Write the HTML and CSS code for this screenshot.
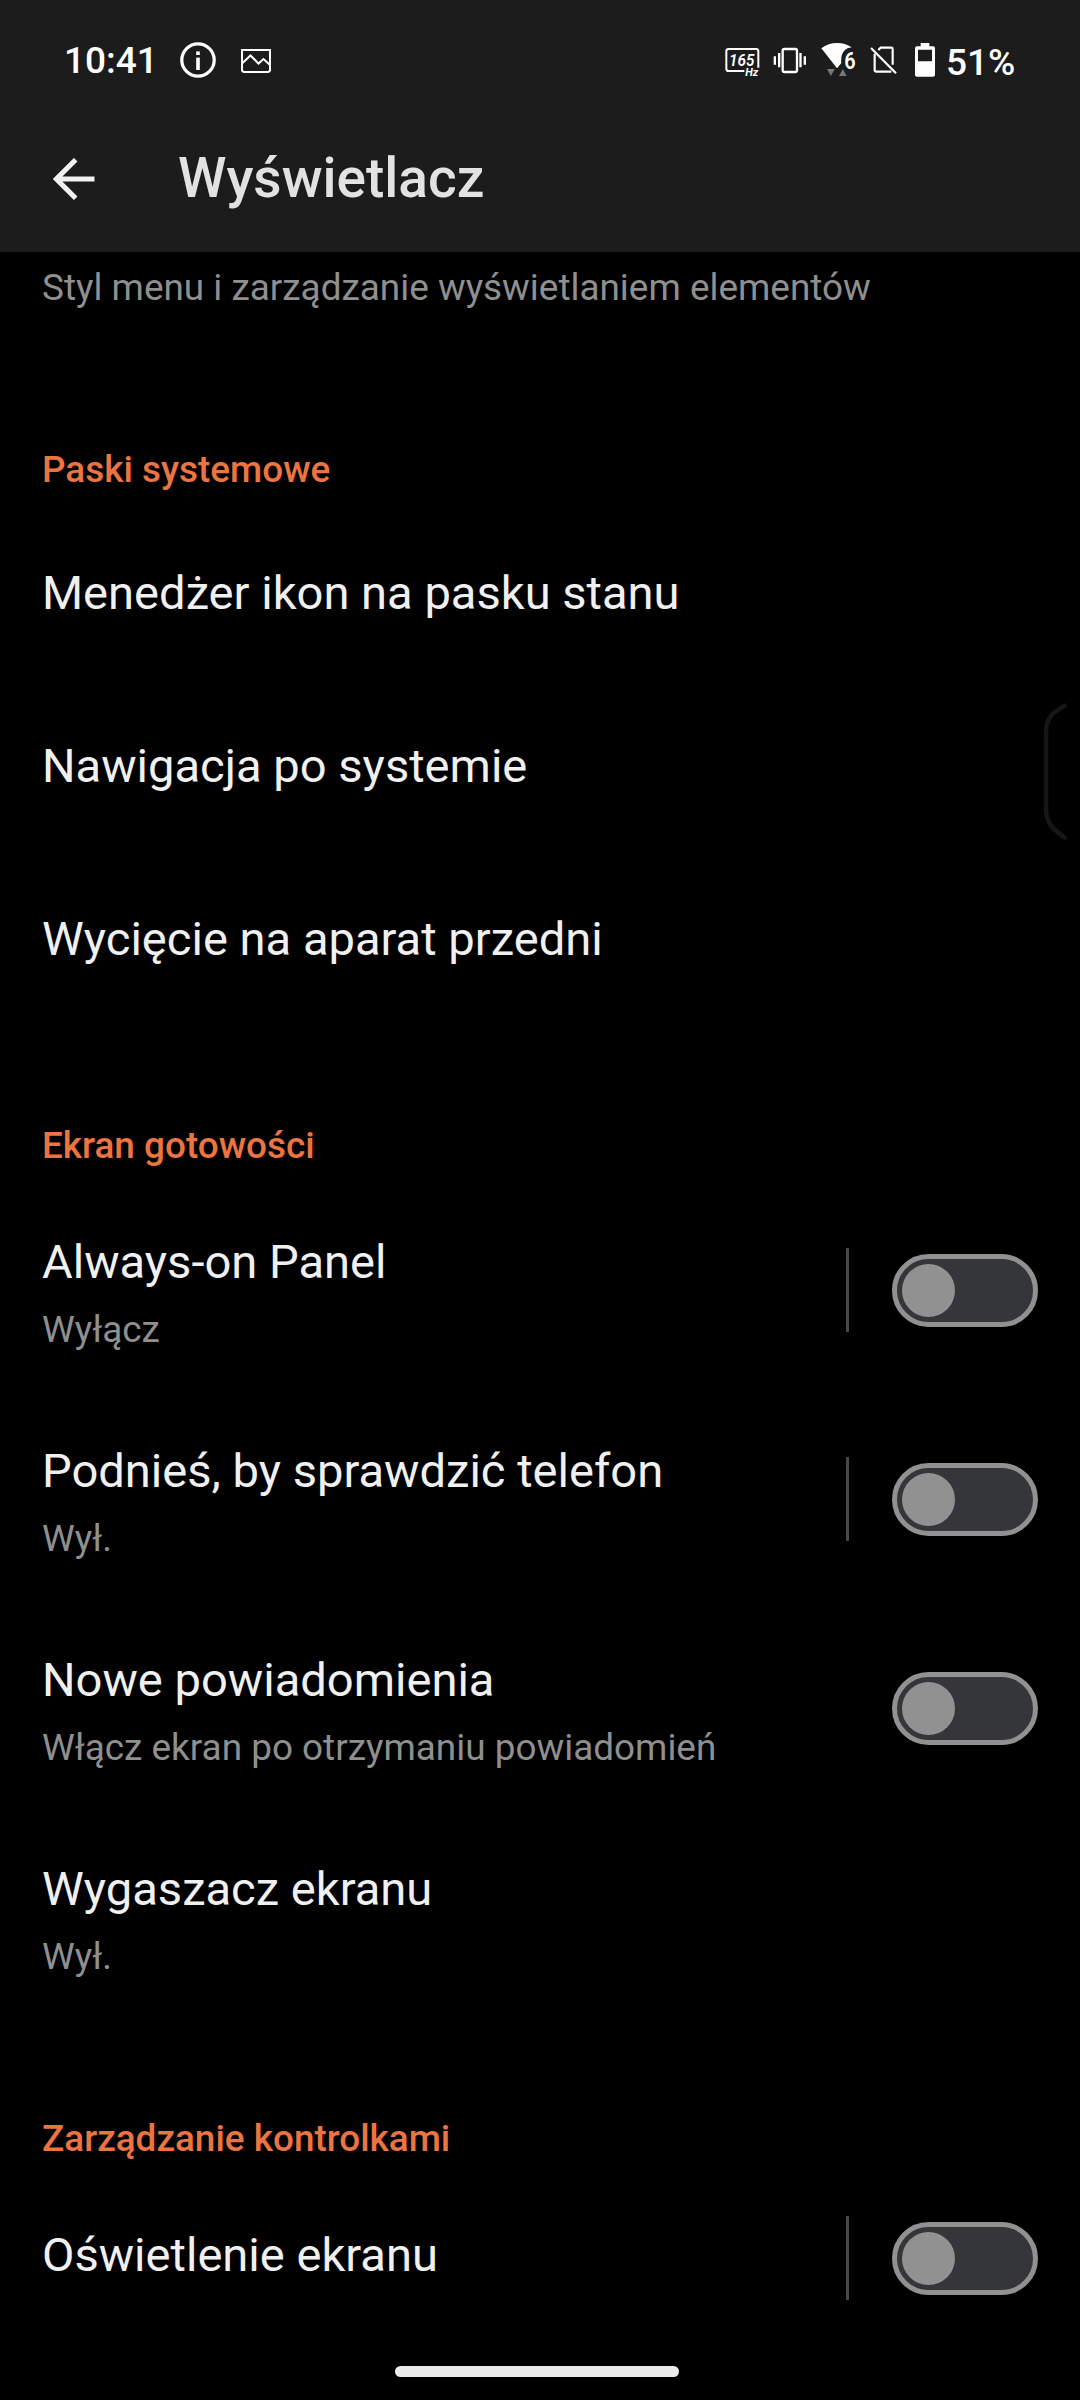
FILE: index.html
```html
<!DOCTYPE html>
<html lang="pl">
<head>
<meta charset="utf-8">
<title>Wyświetlacz</title>
<link rel="stylesheet" href="styles.css">
</head>
<body>
<div class="screen">
  <header class="top">
    <div class="status">
      <span class="time">10:41</span>
      <svg class="ic info" width="36" height="36" viewBox="0 0 36 36" fill="none" stroke="#fff"><circle cx="18" cy="18" r="16.2" stroke-width="3.2"/><path d="M18 15.6V28" stroke-width="3.6"/><path d="M18 9.4V13" stroke-width="3.6"/></svg>
      <svg class="ic photo" width="30" height="24" viewBox="0 0 30 24" fill="none" stroke="#fff" stroke-width="2"><path d="M1 1H29V21.5L27.5 23H2.500L1 21.500Z"/><path d="M1 14.500L9.500 6.500L17.500 14.500L22.500 10L29 16"/></svg>
      <span class="spacer"></span>
      <svg class="ic hz" width="36" height="36" viewBox="75 66 108 108"><path d="M133 153H86Q79 153 79 146V94Q79 87 86 87H168Q175 87 175 94V143" fill="none" stroke="#fff" stroke-width="6"/><text class="glyph rate" x="87" y="137" textLength="76" lengthAdjust="spacingAndGlyphs">165</text><text class="glyph unit" x="136" y="169" textLength="39" lengthAdjust="spacingAndGlyphs">Hz</text></svg>
      <svg class="ic vibrate" width="34" height="36" viewBox="218 66 102 108" fill="none" stroke="#fff"><rect x="247" y="87" width="43" height="69" rx="5" stroke-width="7"/><path d="M236.500 99V142M300.500 99V142" stroke-width="7"/><path d="M223.500 109V134M313.500 109V134" stroke-width="7"/></svg>
      <svg class="ic wifi" width="38" height="36" viewBox="362 66 114 108"><path d="M363 85Q384 69 410 69Q435 69 454 82C436 84 425 96 423 113Q422 122 423 129L410 145Z" fill="#fff"/><text class="glyph six" x="432" y="147" textLength="34" lengthAdjust="spacingAndGlyphs">6</text><path d="M380 147H403L391.500 168ZM416 168H439L427.500 147Z" fill="#777"/></svg>
      <svg class="ic sim" width="28" height="36" viewBox="509 66 84 108" fill="none" stroke="#fff" stroke-width="6.500"><path d="M534 90L541 83H573Q577 83 577 87V134"/><path d="M523 101V150Q523 155 528 155H573"/><path d="M512 84L587 160"/></svg>
      <svg class="ic battery" width="20" height="36" viewBox="645 66 60 108"><path fill="#fff" fill-rule="evenodd" d="M662 69H688V79H699Q705 79 705 85V164Q705 170 699 170H651Q645 170 645 164V85Q645 79 651 79H662ZM654 89V124H696V89Z"/></svg>
      <span class="percent">51%</span>
    </div>
    <div class="appbar">
      <svg class="back" width="42" height="42" viewBox="0 0 42 42" fill="none" stroke="#f1f1f1" stroke-width="5"><path d="M41.500 21H4M22.700 1.700L3.400 21L22.700 40.300"/></svg>
      <h1 class="title">Wyświetlacz</h1>
    </div>
  </header>

  <main class="list">
    <p class="sub lead">Styl menu i zarządzanie wyświetlaniem elementów</p>

    <h2 class="section">Paski systemowe</h2>
    <div class="row single"><span class="name">Menedżer ikon na pasku stanu</span></div>
    <div class="row single"><span class="name">Nawigacja po systemie</span></div>
    <div class="row single"><span class="name">Wycięcie na aparat przedni</span></div>

    <h2 class="section second">Ekran gotowości</h2>
    <div class="row">
      <div class="texts"><span class="name">Always-on Panel</span><span class="sub">Wyłącz</span></div>
      <i class="divider"></i><div class="switch"><i class="knob"></i></div>
    </div>
    <div class="row">
      <div class="texts"><span class="name">Podnieś, by sprawdzić telefon</span><span class="sub">Wył.</span></div>
      <i class="divider"></i><div class="switch"><i class="knob"></i></div>
    </div>
    <div class="row">
      <div class="texts"><span class="name">Nowe powiadomienia</span><span class="sub">Włącz ekran po otrzymaniu powiadomień</span></div>
      <div class="switch"><i class="knob"></i></div>
    </div>
    <div class="row">
      <div class="texts"><span class="name">Wygaszacz ekranu</span><span class="sub">Wył.</span></div>
    </div>

    <h2 class="section third">Zarządzanie kontrolkami</h2>
    <div class="row last">
      <div class="texts"><span class="name">Oświetlenie ekranu</span></div>
      <i class="divider"></i><div class="switch"><i class="knob"></i></div>
    </div>
  </main>

  <svg class="edge" width="24" height="140" viewBox="0 0 24 140" fill="none" stroke="#161616" stroke-width="4.500" stroke-linecap="round"><path d="M21.500 3.500L12 10Q3 17 3 29V107Q3 120 12 128L21.500 135.500"/></svg>
  <div class="homebar"></div>
</div>
</body>
</html>
```
FILE: styles.css
```css
* { box-sizing: border-box; }
body { margin: 0; background: #000; font-family: Roboto, "Noto Sans", sans-serif; }
h1, h2, p { margin: 0; }
.screen { position: relative; width: 1080px; height: 2400px; overflow: hidden; background: #000; }

.top { height: 252px; background: #1c1c1c; }
.status { display: flex; align-items: flex-start; height: 104px; padding: 42px 64px 0 64px; color: #fff; }
.ic { display: block; flex: none; overflow: visible; }
.time { width: 89px; margin-top: -3px; font-size: 37px; font-weight: 500; line-height: 43px; white-space: nowrap; }
.info { margin: 0 0 0 27px; }
.photo { margin: 7px 0 0 25px; }
.spacer { flex: 1; }
.vibrate { margin-left: 12px; }
.wifi { margin-left: 14px; }
.sim { margin-left: 11px; }
.battery { margin-left: 17px; }
.percent { width: 70px; margin: -1px 0 0 11px; font-size: 37px; font-weight: 500; line-height: 43px; white-space: nowrap; }
.glyph { fill: #fff; font-family: Roboto, sans-serif; }
.rate { font-size: 52px; font-style: italic; font-weight: 600; }
.unit { font-size: 31px; font-style: italic; font-weight: 700; }
.six { font-size: 70px; font-weight: 600; }

.appbar { display: flex; align-items: center; height: 148px; padding: 1px 52px 0 53px; }
.back { flex: none; }
.title { margin: 0 0 1px 83px; font-size: 55px; font-weight: 500; line-height: 64px; color: #e2e2e2; white-space: nowrap; }

.list { padding: 14px 42px 0; }
.name { font-size: 47.1px; line-height: 53px; color: #f0f0f0; white-space: nowrap; }
.sub { font-size: 36.9px; line-height: 43px; color: #8f8f8f; white-space: nowrap; }
.lead { height: 170px; }
.section { height: 71px; padding-top: 12px; font-size: 36.9px; font-weight: 500; line-height: 43px; color: #ec7440; }
.section.second { height: 160px; padding-top: 98px; }
.section.third { height: 155px; padding-top: 95px; }

.row { display: flex; align-items: center; height: 209px; }
.row.single { height: 173px; padding-bottom: 2px; }
.texts { display: flex; flex: 1; flex-direction: column; gap: 20px; padding-top: 5px; }
.row.last { height: 163px; }
.last .texts { padding: 0 0 8px; }
.divider { width: 3px; height: 84px; margin: 0 43px 1px 0; background: #484848; }
.switch { width: 146px; height: 73px; padding: 5px; border: 5px solid #919191; border-radius: 37px; background: #35363a; }
.knob { display: block; width: 53px; height: 53px; border-radius: 50%; background: #919191; }

.edge { position: absolute; left: 1043px; top: 702px; }
.homebar { position: absolute; left: 395px; top: 2366px; width: 284px; height: 11px; border-radius: 6px; background: #ececec; }
```
